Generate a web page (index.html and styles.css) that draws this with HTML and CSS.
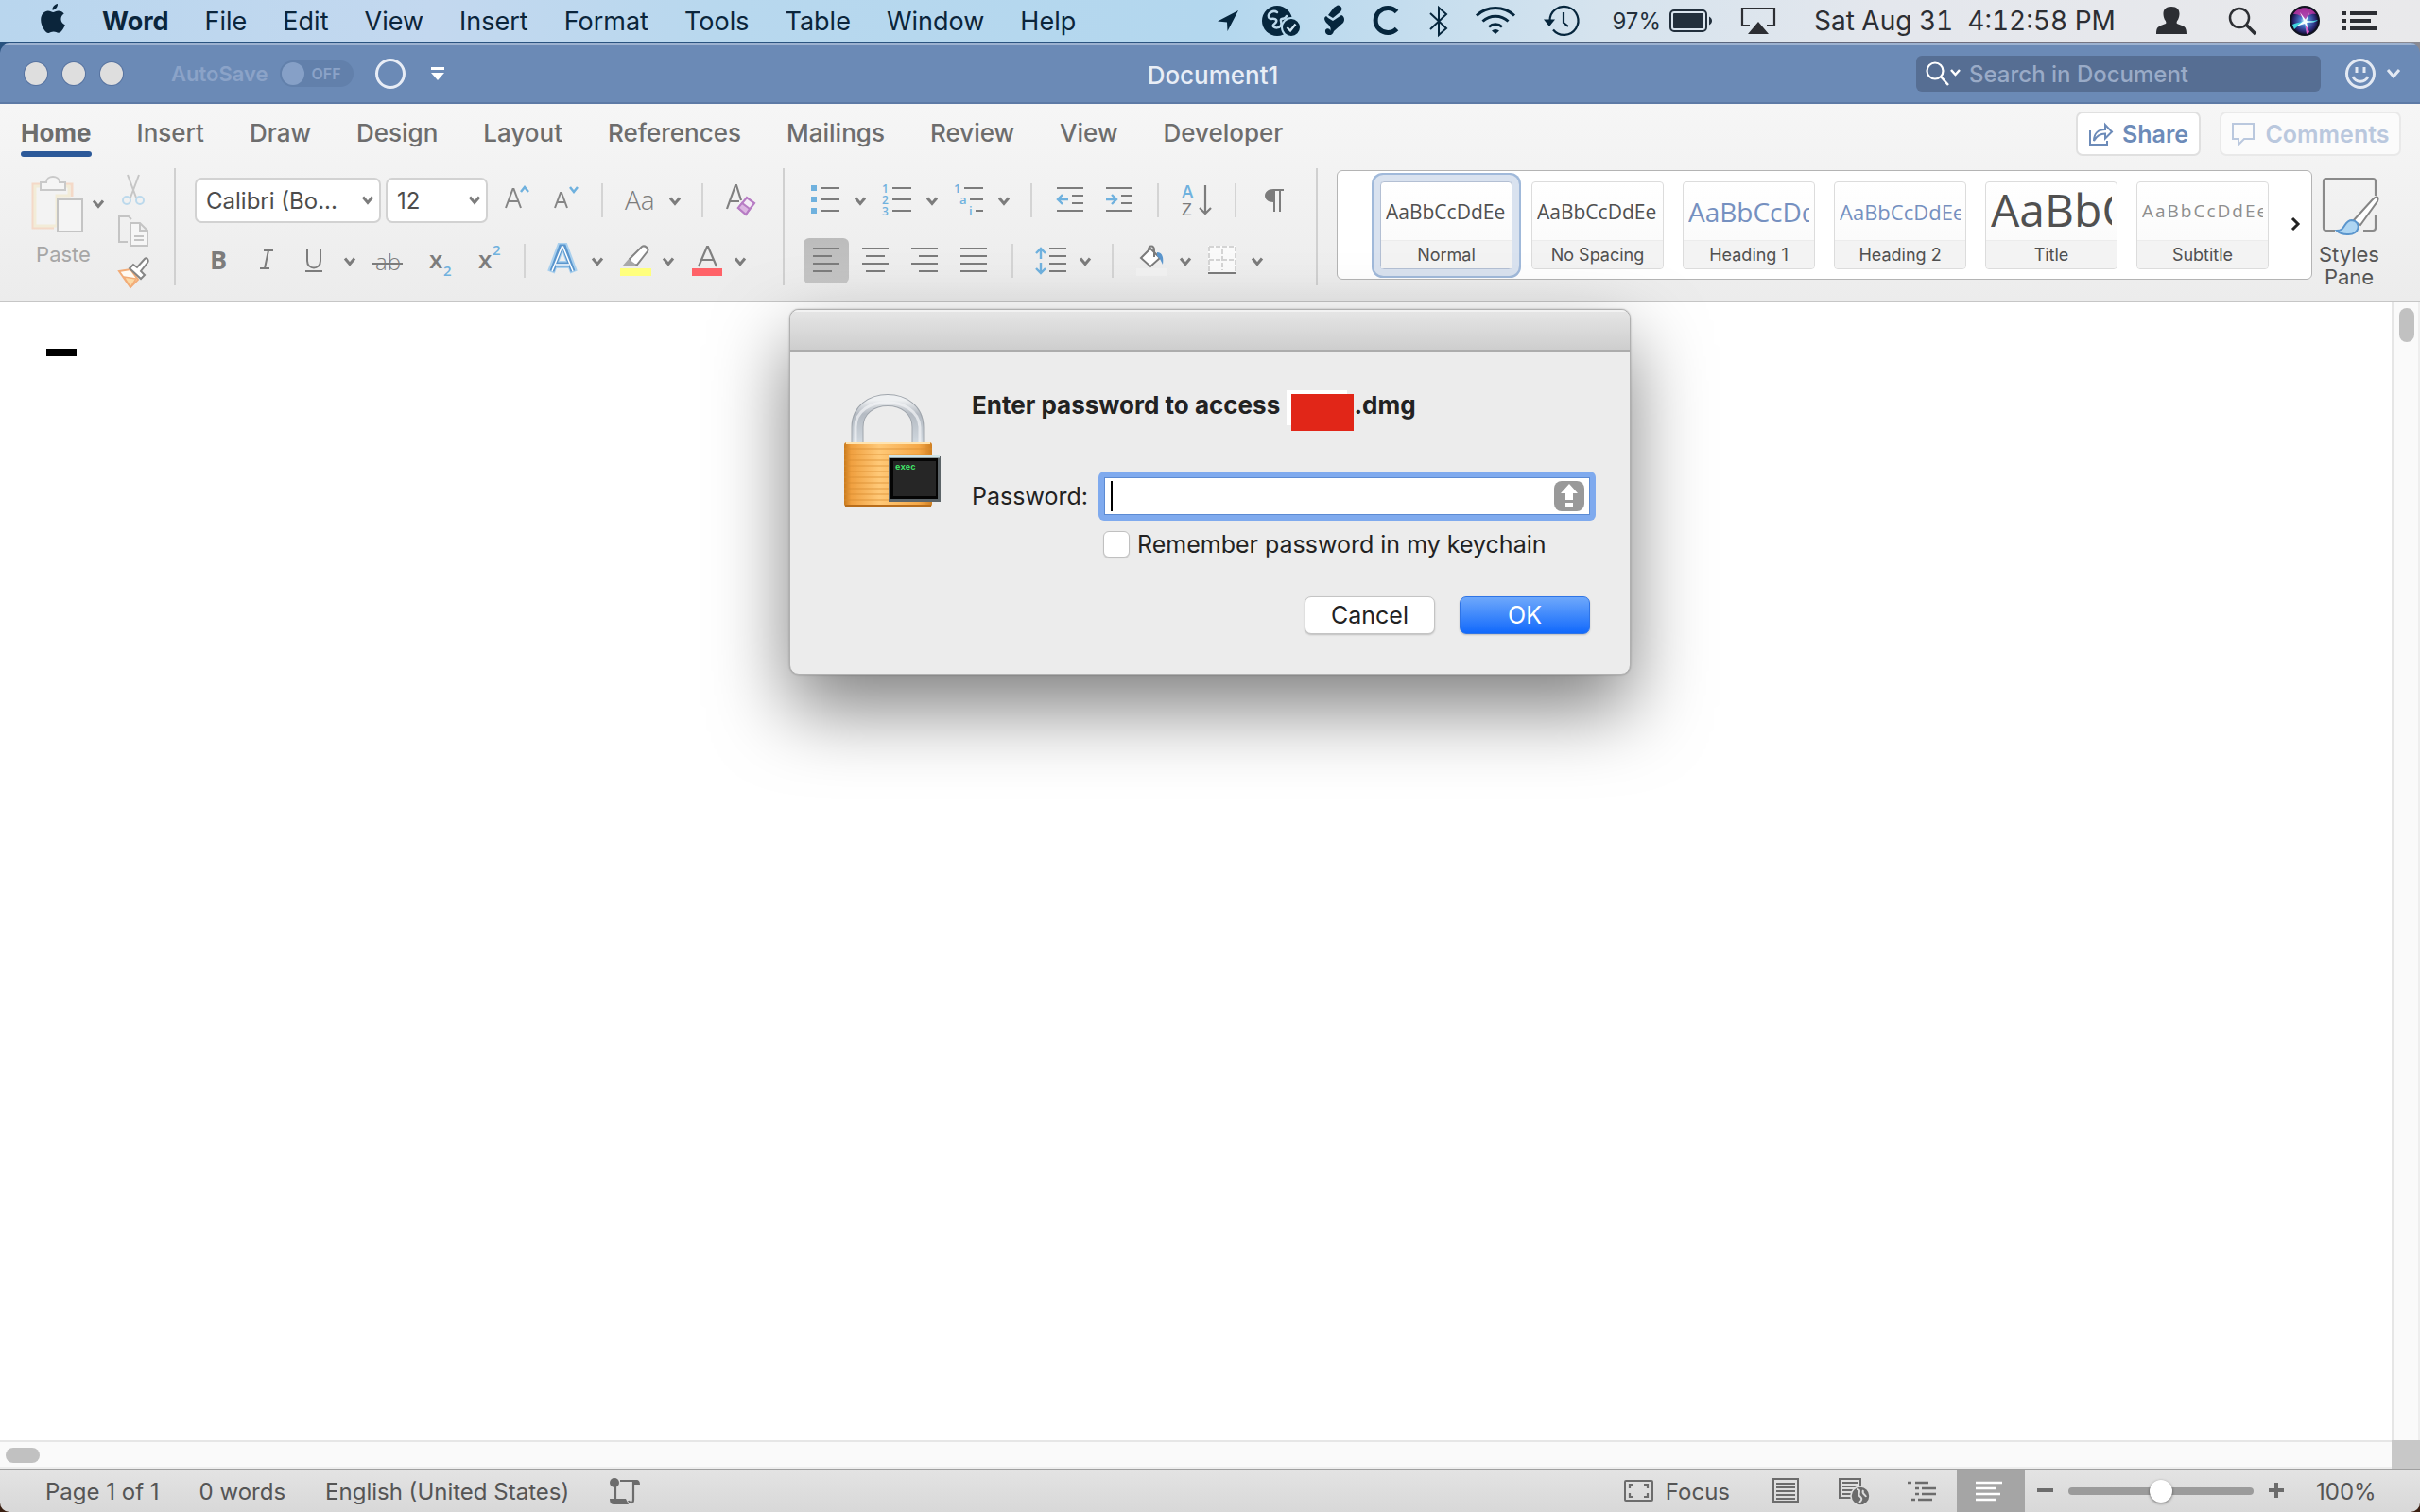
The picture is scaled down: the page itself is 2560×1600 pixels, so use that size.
FILE: index.html
```html
<!DOCTYPE html>
<html lang="en">
<head>
<meta charset="utf-8">
<title>Document1</title>
<link rel="stylesheet" href="styles.css">
</head>
<body>
<svg class="defs" aria-hidden="true">
  <symbol id="chev" viewBox="0 0 12 10" overflow="visible"><path d="M1 1.500 6 7.500 11 1.500" fill="none" stroke="currentColor" stroke-width="3"/></symbol>
  <radialGradient id="siri" cx=".5" cy=".5" r=".5"><stop offset="0" stop-color="#dff"/><stop offset=".3" stop-color="#4a7fd0"/><stop offset=".75" stop-color="#2b2a78"/><stop offset="1" stop-color="#0d0b25"/></radialGradient>
  <linearGradient id="brass" x1="0" x2="1" y1="0" y2="0"><stop offset="0" stop-color="#c97a1c"/><stop offset=".08" stop-color="#f0a040"/><stop offset=".4" stop-color="#ffc978"/><stop offset=".85" stop-color="#f5a848"/><stop offset="1" stop-color="#cf7f22"/></linearGradient>
  <linearGradient id="steel" x1="0" x2="0" y1="0" y2="1"><stop offset="0" stop-color="#eef0f2"/><stop offset=".3" stop-color="#b4bac2"/><stop offset="1" stop-color="#d3dbe2"/></linearGradient>
</svg>

<nav class="menubar">
  <svg class="apple" width="28" height="34" viewBox="0 0 28 34"><path fill="currentColor" d="M19 1c.3 3-2.400 6.500-5.600 6.600C13.100 4.500 16 1.400 19 1zM14.200 10c1.300 0 3-1.600 5.700-1.600 2.400 0 4.500 1.200 5.800 3.100-4.800 3-4 9.800 1.100 11.800-1.200 3.600-4 8.400-6.900 8.500-2 0-2.800-1.200-5.200-1.200s-3.300 1.200-5.200 1.300C6 32.100 1.200 24.300 1.200 17.900c0-6 3.900-9.300 7.600-9.400 2.400 0 4.200 1.500 5.400 1.500z"/></svg>
  <a class="app" href="#">Word</a><a href="#">File</a><a href="#">Edit</a><a href="#">View</a><a href="#">Insert</a><a href="#">Format</a><a href="#">Tools</a><a href="#">Table</a><a href="#">Window</a><a href="#">Help</a>
  <div class="extras">
    <svg width="24" height="44" viewBox="0 0 24 44"><path fill="currentColor" d="M23 11 11.500 33 11 23.500 1 22.500z"/></svg>
    <svg width="40" height="44" viewBox="0 0 40 44"><circle cx="16" cy="22" r="16" fill="currentColor"/><path d="M16 13c-4-3-10 1-9 5s6 0 8 3-5 5-3 7 6 2 8-1-2-6 1-7 4 0 5-3" fill="none" stroke="#bcd9ec" stroke-width="2.500" stroke-linecap="round"/><circle cx="31" cy="29" r="10" fill="currentColor" stroke="#b8daee" stroke-width="2"/><path d="m26.500 29 3.500 3.500 5.500-7" fill="none" stroke="#cfe5f3" stroke-width="2.400"/></svg>
    <svg width="26" height="44" viewBox="0 0 26 44"><path fill="currentColor" d="m12 8 4-2.500c4 0 6 4 3 7L11 19l-5-3zM4 17l2 2 5 3 9-6c3 1 4 5 2 8L12 33c-2 7-10 4-9-1 1-3 6-2 5 1 2-4-1-6-4-9-3-4-2-6 0-7z"/></svg>
    <svg width="34" height="44" viewBox="0 0 34 44"><path d="M28.500 12.500A13 13 0 1 0 28.500 30.500" fill="none" stroke="currentColor" stroke-width="5"/></svg>
    <svg width="30" height="44" viewBox="0 0 30 44"><path d="m6 14 17 16-8 7V8l8 7L6 31" fill="none" stroke="currentColor" stroke-width="2"/></svg>
    <svg width="48" height="44" viewBox="0 0 48 44"><g fill="none" stroke="currentColor" stroke-width="3"><path d="M1 16.500a29 29 0 0 1 40 0"/><path d="M7.500 22.500a20 20 0 0 1 27 0"/><path d="M14 28.500a10.500 10.500 0 0 1 14 0"/></g><path fill="currentColor" d="M17 32.500a6 6 0 0 1 8 0L21 36z"/></svg>
    <svg width="48" height="44" viewBox="0 0 48 44"><path d="M6.500 22A15 15 0 1 1 10 31.500M21 13v11l5 4" fill="none" stroke="currentColor" stroke-width="2.200"/><path fill="currentColor" d="M0 20.500h12L6 28z"/></svg>
    <span class="battery"><span>97%</span><svg width="52" height="44" viewBox="0 0 52 44"><rect x="2" y="11" width="38" height="22" rx="4" fill="none" stroke="currentColor" stroke-width="2"/><rect x="5" y="14" width="32" height="16" rx="1" fill="currentColor"/><path fill="currentColor" d="M43 17.500c4 2 4 7 0 9z"/></svg></span>
    <svg width="54" height="44" viewBox="0 0 54 44"><path d="M10 27H2V9h34v18h-8" fill="none" stroke="currentColor" stroke-width="2.200"/><path fill="currentColor" d="m19 23 11 13H8z"/></svg>
    <span class="clock">Sat Aug 31  4:12:58 PM</span>
    <svg width="56" height="44" viewBox="0 0 56 44"><path fill="currentColor" d="M3 36c0-9 3-8 10-11 1-1 0-3-1-4-3-7-2-14 7-14s10 7 7 14c-1 1-2 3-1 4 7 3 10 2 10 11z"/></svg>
    <svg width="36" height="44" viewBox="0 0 36 44"><circle cx="11" cy="19" r="10" fill="none" stroke="currentColor" stroke-width="2.500"/><path d="m18 26 10 10" stroke="currentColor" stroke-width="3.500"/></svg>
    <svg width="36" height="44" viewBox="0 0 36 44"><circle cx="20" cy="22" r="15" fill="url(#siri)" stroke="#10131f" stroke-width="2"/><path d="M8 15c5-9 18-9 24 0-6-1-9 2-12 6-4-5-7-6-12-6z" fill="#c637a8" opacity=".8"/><path d="M7 26c4-2 8-2 13-4 5 1 10 0 14-1-4 4-9 2-14 2 3 5 4 9 3 13-2-4-3-8-3-13-4 2-8 5-11 8" fill="#3fd6e0"/><path d="m20 22 5 12-3 2z" fill="#e45ac8"/><path d="m11 28 8-6-4-9 6 8 4-8-3 9 9 1-9 1 2 7-4-6z" fill="#f4ffff"/></svg>
    <svg width="36" height="44" viewBox="0 0 36 44"><path d="M0 14h4M8 14h28M0 22h4M8 22h22M0 30h4M8 30h28" stroke="currentColor" stroke-width="4"/></svg>
  </div>
</nav>

<div class="window">
  <header class="titlebar">
    <div class="side">
      <div class="lights"><button aria-label="Close"></button><button aria-label="Minimize"></button><button aria-label="Zoom"></button></div>
      <label class="autosave">AutoSave <span class="toggle"><input type="checkbox" disabled>OFF</span></label>
      <button class="quick" aria-label="Refresh"><svg width="34" height="34" viewBox="0 0 34 34"><circle cx="17" cy="17" r="14.500" fill="none" stroke="#e8edf6" stroke-width="3"/></svg></button>
      <button class="more" aria-label="More"><svg width="16" height="20" viewBox="0 0 16 20"><path fill="#fff" d="M1 3h14v3H1zM1 9h14l-7 8z"/></svg></button>
    </div>
    <h1>Document1</h1>
    <div class="side end">
      <label class="search"><svg width="38" height="30" viewBox="0 0 38 30"><circle cx="10" cy="12" r="8.500" fill="none" stroke="#fff" stroke-width="2.200"/><path d="m16 18 8 9M27 11l4.500 5 4.500-5" fill="none" stroke="#fff" stroke-width="2.500"/></svg><input type="text" placeholder="Search in Document" aria-label="Search in Document"></label>
      <button class="smile" aria-label="Feedback"><svg width="60" height="36" viewBox="0 0 60 36"><circle cx="17" cy="18" r="14.500" fill="none" stroke="#e3e9f3" stroke-width="3"/><path d="M13 11v6M21 11v6M9 21c3 7 13 7 16 0M46 14l6 7 6-7" fill="none" stroke="#e3e9f3" stroke-width="3"/></svg></button>
    </div>
  </header>

  <div class="tabs">
    <a class="active" href="#">Home</a><a href="#">Insert</a><a href="#">Draw</a><a href="#">Design</a><a href="#">Layout</a><a href="#">References</a><a href="#">Mailings</a><a href="#">Review</a><a href="#">View</a><a href="#">Developer</a>
    <div class="actions">
      <button class="share"><svg width="26" height="26" viewBox="0 0 26 26"><path d="M2 9v15h18v-4M6 20c0-8 5-12 12-12V3l7 7.500-7 7v-5c-5 0-9 2-12 7.500z" fill="none" stroke="currentColor" stroke-width="2"/></svg>Share</button>
      <button class="comments"><svg width="26" height="26" viewBox="0 0 26 26"><path d="M2 2h22v16H14l-6 6v-6H2z" fill="none" stroke="currentColor" stroke-width="2"/></svg>Comments</button>
    </div>
  </div>

  <div class="ribbon">
    <div class="clipboard">
      <button class="paste"><svg width="84" height="64" viewBox="0 0 84 64"><path d="M10 9H3v46h22M38 9h6v13" fill="none" stroke="#f4d9c8" stroke-width="3"/><path d="M5 11h36v10H28v32H5z" fill="#f3f3f3" stroke="#f2ecd8" stroke-width="3"/><path d="M11 15V7h6c0-8 14-8 14 0h6v8z" fill="#f5f5f5" stroke="#c9c9c9" stroke-width="2"/><rect x="29" y="25" width="26" height="34" fill="#f4f4f4" stroke="#c4c4c4" stroke-width="2"/><use href="#chev" x="66" y="25" width="12" height="10" color="#7c7c7c"/></svg><span>Paste</span></button>
      <div class="clipcol">
        <button aria-label="Cut"><svg width="34" height="34" viewBox="0 0 34 34"><path d="m11 1 9 24M23 1l-9 24" stroke="#c6c6c6" stroke-width="2"/><g fill="none" stroke="#bcd9ec" stroke-width="2"><circle cx="10" cy="28" r="4"/><circle cx="24" cy="28" r="4"/></g></svg></button>
        <button aria-label="Copy"><svg width="34" height="34" viewBox="0 0 34 34"><path d="M11 28H2V1h10l3 3" fill="none" stroke="#c4c4c4" stroke-width="2"/><path d="M14 8h10l8 8v16H14zM24 8v8h8M18 22h10M18 26h10" fill="#f6f6f6" stroke="#c4c4c4" stroke-width="2"/></svg></button>
        <button aria-label="Format Painter"><svg width="34" height="34" viewBox="0 0 34 34"><path d="m2 15 12-2 8 11-8 8z" fill="#fffaf2" stroke="#f2ac77" stroke-width="2"/><path d="m7 21 13 2-6 9z" fill="#fbd9a5" stroke="#f2ac77" stroke-width="1.500"/><path d="m13 12 4-4 4 3 8-9c2-2 5 1 3 4l-7 9 4 4-4 4z" fill="#fff" stroke="#858585" stroke-width="2"/></svg></button>
      </div>
    </div>
    <div class="divider"></div>

    <div class="group font">
      <div class="row">
        <div class="drop family"><select aria-label="Font"><option>Calibri (Bo...</option></select><svg width="12" height="10"><use href="#chev"/></svg></div>
        <div class="drop size"><select aria-label="Font size"><option>12</option></select><svg width="12" height="10"><use href="#chev"/></svg></div>
        <button aria-label="Grow font"><svg width="52" height="48" viewBox="0 0 52 48"><path d="m11 32 7.500-20h1L27 32M13.500 25h11" fill="none" stroke="#858585" stroke-width="2"/><path d="m27 15 4-5 4 5" fill="none" stroke="#6fb1de" stroke-width="2.500"/></svg></button>
        <button aria-label="Shrink font"><svg width="52" height="48" viewBox="0 0 52 48"><path d="m11 32 6-16h1l6 16M13 26h9" fill="none" stroke="#858585" stroke-width="2"/><path d="m27 10 4 5 4-5" fill="none" stroke="#6fb1de" stroke-width="2.500"/></svg></button>
        <i class="sep"></i>
        <button aria-label="Change case"><svg width="88" height="48" viewBox="0 0 88 48"><text x="15" y="34" class="light" font-size="28">Aa</text><use href="#chev" x="62" y="20" width="12" height="10"/></svg></button>
        <i class="sep"></i>
        <button aria-label="Clear formatting"><svg width="62" height="48" viewBox="0 0 62 48"><path d="m17 33 9-25h1l5 16M20 25h10" fill="none" stroke="#808080" stroke-width="2.200"/><path d="m29 32 9-11 8 6-9 12z" fill="#f4ecf6" stroke="#b77cc4" stroke-width="2.200"/><path d="m29 32 4-5 8 6-4 6z" fill="#dcb6e2" stroke="#b77cc4" stroke-width="2"/></svg></button>
      </div>
      <div class="row">
        <button aria-label="Bold"><svg width="50" height="48" viewBox="0 0 50 48"><text x="16" y="33" class="bold" font-size="27">B</text></svg></button>
        <button aria-label="Italic"><svg width="52" height="48" viewBox="0 0 52 48"><path d="M23 13h10M19 32h10M28 13l-4 19" fill="none" stroke="#7c7c7c" stroke-width="2"/></svg></button>
        <button aria-label="Underline"><svg width="78" height="48" viewBox="0 0 78 48"><path d="M17 12v12c0 10 14 10 14 0V12M15 35h18" fill="none" stroke="#7c7c7c" stroke-width="2"/><use href="#chev" x="56" y="20" width="12" height="10"/></svg></button>
        <button aria-label="Strikethrough"><svg width="50" height="48" viewBox="0 0 50 48"><text x="11" y="34" class="light" font-size="24">ab</text><path d="M8 27h32" stroke="#7c7c7c" stroke-width="2"/></svg></button>
        <button aria-label="Subscript"><svg width="56" height="48" viewBox="0 0 56 48"><text x="18" y="32" class="semi" font-size="26">x</text><text x="33" y="40" class="blue" font-size="15">2</text></svg></button>
        <button aria-label="Superscript"><svg width="54" height="48" viewBox="0 0 54 48"><text x="14" y="32" class="semi" font-size="26">x</text><text x="29" y="18" class="blue" font-size="15">2</text></svg></button>
        <i class="sep"></i>
        <button aria-label="Text effects"><svg width="80" height="48" viewBox="0 0 80 48"><path d="m19 36 10-27h4l10 27M24 28h14" fill="none" stroke="#a9d0ee" stroke-width="8"/><path d="m20 35 9.500-26h3L42 35M24 28h14" fill="none" stroke="#5b96cd" stroke-width="5"/><path d="m20 35 10.500-26h1L42 35M24 28h14" fill="none" stroke="#fff" stroke-width="1.500"/><use href="#chev" x="62" y="20" width="12" height="10"/></svg></button>
        <button aria-label="Highlight"><svg width="76" height="48" viewBox="0 0 76 48"><path fill="#ffff7d" d="M12 32h33v8H12z"/><path d="M22 22 35 9c3-2 8 2 6 5L30 28c-4 1-8-2-8-6z" fill="#fff" stroke="#858585" stroke-width="2"/><path d="m21 22 8 6-3 2H14z" fill="#a8a8a8"/><use href="#chev" x="57" y="20" width="12" height="10"/></svg></button>
        <button aria-label="Font color"><svg width="80" height="48" viewBox="0 0 80 48"><path fill="#ff6268" d="M12 32h32v8H12z"/><path d="m19 30 9-21h1l9 21M22 23h13" fill="none" stroke="#808080" stroke-width="2.200"/><use href="#chev" x="57" y="20" width="12" height="10"/></svg></button>
      </div>
    </div>
    <div class="divider"></div>

    <div class="group para">
      <div class="row">
        <button aria-label="Bullets"><svg width="72" height="48" viewBox="0 0 72 48"><path fill="#6fb1de" d="M8 8h6v6H8zM8 20h6v6H8zM8 32h6v6H8z"/><path d="M18 11h20M18 23h20M18 35h20" stroke="#7c7c7c" stroke-width="2"/><use href="#chev" x="54" y="20" width="12" height="10"/></svg></button>
        <button aria-label="Numbering"><svg width="76" height="48" viewBox="0 0 76 48"><text class="blue" font-size="12"><tspan x="11" y="16">1</tspan><tspan x="11" y="28">2</tspan><tspan x="11" y="40">3</tspan></text><path d="M22 11h20M22 23h20M22 35h20" stroke="#7c7c7c" stroke-width="2"/><use href="#chev" x="58" y="20" width="12" height="10"/></svg></button>
        <button aria-label="Multilevel list"><svg width="84" height="48" viewBox="0 0 84 48"><text class="blue" font-size="13"><tspan x="11" y="16">1</tspan><tspan x="17" y="28">a</tspan><tspan x="27" y="40">i</tspan></text><path d="M22 11h20M28 23h14M34 35h8" stroke="#7c7c7c" stroke-width="2"/><use href="#chev" x="58" y="20" width="12" height="10"/></svg></button>
        <i class="sep"></i>
        <button aria-label="Decrease indent"><svg width="58" height="48" viewBox="0 0 58 48"><path d="M18 11h28M34 19h12M34 27h12M18 35h28" stroke="#7c7c7c" stroke-width="2"/><path d="M30 23H19M24 18l-5 5 5 5" fill="none" stroke="#6fb1de" stroke-width="2.400"/></svg></button>
        <button aria-label="Increase indent"><svg width="58" height="48" viewBox="0 0 58 48"><path d="M12 11h28M28 19h12M28 27h12M12 35h28" stroke="#7c7c7c" stroke-width="2"/><path d="M12 23h11M18 18l5 5-5 5" fill="none" stroke="#6fb1de" stroke-width="2.400"/></svg></button>
        <i class="sep"></i>
        <button aria-label="Sort"><svg width="64" height="48" viewBox="0 0 64 48"><text x="16" y="22" class="blue" font-size="19">A</text><text x="16" y="40" class="grey" font-size="19">Z</text><path d="M41 8v30M35 32l6 6 6-6" fill="none" stroke="#7c7c7c" stroke-width="2.200"/></svg></button>
        <i class="sep"></i>
        <button aria-label="Show marks"><svg width="64" height="48" viewBox="0 0 64 48"><path fill="#7c7c7c" d="M42 12v2h-3v22h-2V14h-4v22h-2V26c-12 0-12-14 0-14z"/></svg></button>
      </div>
      <div class="row">
        <div class="align">
          <button class="on" aria-label="Align left"><svg width="48" height="48" viewBox="0 0 48 48"><path d="M10 11h28M10 19h20M10 27h28M10 35h20" stroke="#7c7c7c" stroke-width="2"/></svg></button>
          <button aria-label="Center"><svg width="48" height="48" viewBox="0 0 48 48"><path d="M10 11h28M14 19h20M10 27h28M14 35h20" stroke="#7c7c7c" stroke-width="2"/></svg></button>
          <button aria-label="Align right"><svg width="48" height="48" viewBox="0 0 48 48"><path d="M10 11h28M18 19h20M10 27h28M18 35h20" stroke="#7c7c7c" stroke-width="2"/></svg></button>
          <button aria-label="Justify"><svg width="48" height="48" viewBox="0 0 48 48"><path d="M10 11h28M10 19h28M10 27h28M10 35h28" stroke="#7c7c7c" stroke-width="2"/></svg></button>
        </div>
        <i class="sep"></i>
        <button aria-label="Line spacing"><svg width="88" height="48" viewBox="0 0 88 48"><path d="M30 11h18M30 19h18M30 27h18M30 35h18" stroke="#7c7c7c" stroke-width="2"/><path d="M21 22V12M16 16l5-5 5 5M21 26v10M16 32l5 5 5-5" fill="none" stroke="#6fb1de" stroke-width="2.400"/><use href="#chev" x="62" y="20" width="12" height="10"/></svg></button>
        <i class="sep"></i>
        <button aria-label="Shading"><svg width="80" height="48" viewBox="0 0 80 48"><path fill="#f2f2f2" d="M16 32h32v8H16z"/><path d="m21 21 10-10 10 10-10 9z" fill="#fff" stroke="#7c7c7c" stroke-width="2"/><path d="M29 13c0-6 6-6 6 0v7" fill="none" stroke="#7c7c7c" stroke-width="2"/><path d="M38 15c6 0 7 6 6 13-2-4-3-7-6-9z" fill="#5b96cd"/><use href="#chev" x="62" y="20" width="12" height="10"/></svg></button>
        <button aria-label="Borders"><svg width="80" height="48" viewBox="0 0 80 48"><path fill="#fafafa" d="M12 8h30v28H12z"/><path d="M13 9h28v26M13 9v26M27 12v22M13 23h28" fill="none" stroke="#d4d4d4" stroke-width="2" stroke-dasharray="5 2"/><path d="M12 37h30" stroke="#7c7c7c" stroke-width="2"/><use href="#chev" x="58" y="20" width="12" height="10"/></svg></button>
      </div>
    </div>
    <div class="divider"></div>

    <div class="gallery">
      <button class="card selected"><span class="sample">AaBbCcDdEe</span><span class="name">Normal</span></button>
      <button class="card"><span class="sample">AaBbCcDdEe</span><span class="name">No Spacing</span></button>
      <button class="card"><span class="sample h1s">AaBbCcDdEe</span><span class="name">Heading 1</span></button>
      <button class="card"><span class="sample h2s">AaBbCcDdEe</span><span class="name">Heading 2</span></button>
      <button class="card"><span class="sample title">AaBbCcDdEe</span><span class="name">Title</span></button>
      <button class="card"><span class="sample sub">AaBbCcDdEe</span><span class="name">Subtitle</span></button>
      <button class="next" aria-label="More styles"><svg width="12" height="14" viewBox="0 0 12 14"><path d="m2 1 6 6-6 6" fill="none" stroke="#222" stroke-width="3"/></svg></button>
    </div>
    <button class="pane"><svg width="64" height="64" viewBox="0 0 64 64"><path d="M15 58H6c-2 0-3-1-3-3V6c0-2 1-3 3-3h49c2 0 3 1 3 3v15M58 42v13c0 2-1 3-3 3H45" fill="none" stroke="#8a8a8a" stroke-width="2.200"/><path d="m34 48 20-22c5-5 8-5 6 1L42 52z" fill="#fff" stroke="#858585" stroke-width="2"/><path d="M17 58c10 0 7-11 16-11 10 1 9 16-5 15-5 0-9-2-11-4z" fill="#aed5f2" stroke="#5b96cd" stroke-width="2"/></svg><span>Styles Pane</span></button>
  </div>

  <main class="document">
    <div class="page"><div class="mark"></div></div>
    <div class="vscroll"><i></i></div>
    <div class="hscroll"><i></i></div>
    <div class="corner"></div>
  </main>

  <footer class="status">
    <span>Page 1 of 1</span><span>0 words</span><span>English (United States)</span>
    <svg width="34" height="30" viewBox="0 0 34 30"><circle cx="6" cy="6" r="5" fill="#6c6c6c"/><path d="M7 10v14M12 4h14v20c0 4-4 4-5 1" fill="none" stroke="#6c6c6c" stroke-width="2.200"/><path d="M1 23h17l3 6H5c-3 0-4-3-4-6zM25 3h4c3 0 4 2 4 5h-6z" fill="#6c6c6c"/></svg>
    <div class="views">
      <button class="focus"><svg width="32" height="26" viewBox="0 0 32 26"><rect x="1" y="2" width="29" height="21" rx="1" fill="none" stroke="#6c6c6c" stroke-width="2"/><path d="M6 10V6h4M21 6h4v4M25 15v4h-4M10 19H6v-4" fill="none" stroke="#6c6c6c" stroke-width="2.200"/></svg>Focus</button>
      <button aria-label="Print layout"><svg width="71" height="44" viewBox="0 0 71 44"><path d="M24 9h26v24H24zM27 14h20M27 18h20M27 22h20M27 26h20M27 30h20" fill="none" stroke="#6c6c6c" stroke-width="2"/></svg></button>
      <button aria-label="Web layout"><svg width="75" height="44" viewBox="0 0 75 44"><path d="M37 29H23V9h22v9M26 13h16M26 17h16M26 21h11M26 25h10" fill="none" stroke="#6c6c6c" stroke-width="2"/><circle cx="45" cy="27" r="10" fill="#6c6c6c" stroke="#dedede" stroke-width="1.500"/><path d="M41 20c6 0 1 5 3 7s4 3 0 7M48 21c-2 4 2 4 3 7" fill="none" stroke="#ddd" stroke-width="2"/></svg></button>
      <button aria-label="Outline"><svg width="72" height="44" viewBox="0 0 72 44"><path d="M20 13h4M28 13h14M28 19h4M35 19h15M28 25h4M35 25h15M24 31h4M31 31h15" stroke="#6c6c6c" stroke-width="2.400"/></svg></button>
      <button class="on" aria-label="Draft"><svg width="72" height="44" viewBox="0 0 72 44"><path d="M20 13h28M20 19h22M20 25h26M20 31h22" stroke="#fff" stroke-width="2.400"/></svg></button>
      <button aria-label="Zoom out"><svg width="44" height="44" viewBox="0 0 44 44"><path d="M13 21h17" stroke="#6c6c6c" stroke-width="4"/></svg></button>
      <input class="zoom" type="range" min="0" max="100" value="50" aria-label="Zoom">
      <button aria-label="Zoom in"><svg width="46" height="44" viewBox="0 0 46 44"><path d="M16 21h16M24 13v16" stroke="#6c6c6c" stroke-width="4"/></svg></button>
      <span class="pct">100%</span>
    </div>
  </footer>
</div>

<form class="dialog" role="dialog" aria-label="Password">
  <div class="dialog-bar"></div>
  <div class="dialog-body">
    <svg class="lock" width="104" height="128" viewBox="0 0 104 128">
      <path d="M17 60V40c0-38 64-38 64 0v20" fill="none" stroke="#a0a6ad" stroke-width="13"/>
      <path d="M17 60V40c0-38 64-38 64 0v20" fill="none" stroke="url(#steel)" stroke-width="11"/>
      <path d="M15 60V40c0-35 66-35 68 0v20" fill="none" stroke="#f2f4f6" stroke-width="3" opacity=".7"/>
      <rect x="3" y="56" width="93" height="68" rx="3" fill="url(#brass)"/>
      <path d="M3 63h93M3 69h93M3 75h93M3 81h93M3 87h93M3 93h93M3 99h93M3 105h93M3 111h93M3 117h93" stroke="#d98d32" stroke-width="1.500" opacity=".5"/>
      <path d="M5 57h89" stroke="#ffe4b0" stroke-width="2"/><path d="M4 123h91" stroke="#b86d1b" stroke-width="2"/>
      <rect x="50" y="71" width="55" height="48" fill="#5c6468"/><path d="M50 71h54" stroke="#cfe3e6" stroke-width="3"/><rect x="52" y="73" width="50" height="43" fill="#050505"/><rect x="55" y="76" width="45" height="37" fill="#262626"/>
      <text x="57" y="85" class="exec" font-size="9">exec</text>
    </svg>
    <div class="fields">
      <h2>Enter password to access <span class="redacted"></span>.dmg</h2>
      <label for="pw">Password:</label>
      <div class="pwbox"><input id="pw" type="password"><i class="caret"></i><svg width="32" height="32" viewBox="0 0 32 32"><rect width="32" height="32" rx="8" fill="#999"/><path fill="#fff" d="m16 3 9 10h-5v7h-8v-7H7zM12 23h8v5h-8z"/></svg></div>
      <label class="remember"><input type="checkbox">Remember password in my keychain</label>
      <div class="buttons"><button type="button">Cancel</button><button type="button" class="ok">OK</button></div>
    </div>
  </div>
</form>
</body>
</html>
```
FILE: styles.css
```css
* { box-sizing: border-box; }
body {
  margin: 0;
  min-height: 100vh;
  display: flex;
  flex-direction: column;
  position: relative;
  overflow-x: hidden;
  font-family: Inter, "Liberation Sans", sans-serif;
  font-size: 25px;
  color: #555;
  background: linear-gradient(90deg, #28527f, #2b5480 50%, #6c6c7c 80%, #8a8a92) top / 100% 100px no-repeat, #3a2013;
}
svg { display: block; flex: none; overflow: visible; }
.defs { position: absolute; width: 0; height: 0; }
button { font: inherit; color: inherit; background: none; border: 0; padding: 0; margin: 0; }
input, select { font: inherit; margin: 0; }
a { color: inherit; text-decoration: none; }
span, a, label, button { white-space: nowrap; }

.menubar {
  display: flex;
  align-items: center;
  gap: 38px;
  height: 44px;
  padding: 0 46px 0 42px;
  font-size: 27px;
  color: #0b253b;
  background: linear-gradient(90deg, #b9d6ee, #c3d8ef 18%, #b8d8ee 30%, #b3d7ee 50%, #d5e3ee 66%, #e4e7ed 78%, #e9e9eb);
}
.apple { margin-bottom: 4px; }
.app { font-weight: 700; }
.extras { display: flex; align-items: center; gap: 24px; margin-left: auto; color: #06263d; }
.battery { display: flex; align-items: center; gap: 8px; font-size: 24px; color: #222f3c; }
.battery ~ * { color: #2c2e33; }
.clock { min-width: 335px; white-space: pre; font-size: 28px; font-variant-numeric: tabular-nums; }

.window {
  flex: 1;
  display: flex;
  flex-direction: column;
  margin-top: 2px;
  border-radius: 10px;
  overflow: hidden;
}
.titlebar {
  display: flex;
  align-items: center;
  height: 64px;
  padding: 0 20px 0 26px;
  background: #6b8ab6;
  border-top: 2px solid #9db2d0;
  border-bottom: 2px solid #5d7aa6;
}
.side { flex: 1; display: flex; align-items: center; }
.end { justify-content: flex-end; }
.lights { display: flex; gap: 16px; }
.lights button { width: 24px; height: 24px; border-radius: 50%; background: #dedede; box-shadow: 0 0 0 1px #5773a0; }
.autosave { display: flex; align-items: center; gap: 12px; margin-left: 51px; font-size: 22px; font-weight: 600; color: #8ba3c8; }
.toggle { display: flex; align-items: center; gap: 8px; width: 78px; height: 28px; padding: 0 2px; border-radius: 14px; background: #6280ab; font-size: 16px; }
.toggle input { appearance: none; width: 24px; height: 24px; border-radius: 50%; background: #86a0c7; }
.quick { margin-left: 22px; }
.more { margin-left: 25px; }
.titlebar h1 { margin: 0; padding-top: 2px; font-size: 26px; font-weight: 500; color: #e9eef6; }
.search {
  display: flex;
  align-items: center;
  gap: 8px;
  width: 428px;
  height: 38px;
  padding: 0 10px;
  border-radius: 6px;
  background: #566e93;
}
.search input { flex: 1; min-width: 0; border: 0; padding: 0; background: none; font-size: 24px; font-weight: 500; }
.search input::placeholder { color: #9aabc7; opacity: 1; }
.smile { margin-left: 25px; }

.tabs {
  display: flex;
  align-items: center;
  gap: 48px;
  height: 64px;
  padding: 0 20px 0 22px;
  background: linear-gradient(#f6f6f6, #f3f3f3);
  font-size: 26px;
  font-weight: 500;
  color: #6d6d6d;
}
.tabs > a { align-self: flex-start; line-height: 50px; margin-top: 6px; }
.tabs > .active { font-weight: 700; }
.tabs > .active::after { content: ""; display: block; height: 6px; margin-top: -6px; border-radius: 3px; background: #2c5999; }
.actions { display: flex; gap: 20px; margin-left: auto; align-self: flex-start; padding-top: 8px; font-size: 25px; font-weight: 600; }
.actions button { display: flex; align-items: center; justify-content: center; gap: 10px; height: 47px; border: 2px solid #e0e0e0; border-radius: 7px; background: #fff; }
.actions .share { width: 132px; color: #6c8bb9; }
.actions .comments { width: 192px; color: #bac8de; border-color: #e9e9e9; background: #fbfbfb; }

.ribbon {
  display: flex;
  height: 146px;
  padding-top: 4px;
  background: linear-gradient(#f3f3f3, #ececec);
  border-bottom: 2px solid #c6c6c6;
}
.divider { width: 2px; height: 124px; background: #d0d0d0; }
.clipboard { display: flex; width: 184px; padding-left: 30px; }
.paste { display: flex; flex-direction: column; align-items: flex-start; width: 94px; padding-top: 8px; font-size: 22px; color: #a6a6a6; }
.paste svg { margin-left: 2px; }
.paste span { width: 74px; margin-top: 7px; text-align: center; line-height: 24px; }
.clipcol { display: flex; flex-direction: column; gap: 10px; padding-top: 6px; }
.group { display: flex; flex-direction: column; gap: 16px; padding: 10px 0 0 20px; color: #7c7c7c; }
.font { width: 642px; }
.para { width: 562px; }
.row { display: flex; align-items: center; height: 48px; }
.sep { flex: none; width: 2px; height: 36px; margin: 0 8px; background: #d4d4d4; }
.align { display: flex; gap: 4px; margin-right: 8px; }
.align .on { border-radius: 6px; background: linear-gradient(#bcbcbc, #c6c6c6); }
.drop { display: grid; align-items: center; height: 48px; border: 2px solid #d2d2d2; border-radius: 7px; background: #fff; }
.drop > * { grid-area: 1 / 1; }
.drop svg { justify-self: end; margin-right: 6px; }
.drop select { appearance: none; width: 100%; height: 44px; border: 0; padding: 0 10px; background: none; color: #4c4c4c; font-size: 24px; }
.family { width: 197px; margin-right: 5px; }
.size { width: 108px; margin-right: 8px; }
svg text { font-family: "Open Sans", "Noto Sans", sans-serif; fill: #7c7c7c; }
svg .light { font-weight: 300; }
svg .bold { font-weight: 700; }
svg .semi { font-weight: 600; }
svg .blue { fill: #6fb1de; font-weight: 600; }
svg .exec { font-family: "Liberation Mono", monospace; fill: #42e86a; font-weight: 700; }

.gallery {
  flex: 1;
  display: flex;
  align-items: flex-start;
  gap: 20px;
  height: 116px;
  margin: 2px 0 0 20px;
  padding: 11px 10px 0 45px;
  border: 1px solid #b4b4b4;
  border-radius: 6px;
  background: #fff;
}
.card {
  flex: none;
  display: flex;
  flex-direction: column;
  width: 140px;
  height: 93px;
  border: 1px solid #dcdcdc;
  border-radius: 4px;
  overflow: hidden;
  background: linear-gradient(#fff, #f9f9f9);
}
.selected { overflow: visible; border-color: #b3bfd3; box-shadow: 0 0 0 7px #d9e2ef, 0 0 0 9px #a0b9da; }
.sample { align-self: stretch; height: 61px; margin: 0 5px; line-height: 62px; overflow: hidden; text-align: left; font-family: "Open Sans", "Noto Sans", sans-serif; font-size: 21px; color: #505050; }
.h1s { font-size: 28px; color: #7590c0; }
.h2s { font-size: 22px; color: #7590c0; }
.title { font-size: 48px; line-height: 58px; }
.sub { font-size: 19px; letter-spacing: 2px; line-height: 60px; color: #8e8e8e; }
.name { height: 30px; border-top: 1px solid #ececec; background: #f3f3f3; line-height: 30px; font-size: 18px; color: #505050; }
.next { margin: 38px 0 0 auto; }
.pane { display: flex; flex-direction: column; align-items: center; width: 114px; padding: 8px 36px 0 0; font-size: 22px; color: #555; }
.pane span { width: 80px; margin-top: 7px; line-height: 24px; white-space: normal; }
.pane svg { margin-left: 4px; }

.document { flex: 1; display: grid; grid-template: 1fr 30px / 1fr 30px; background: #fff; }
.page { padding: 49px; }
.mark { width: 32px; height: 8px; background: #000; }
.vscroll { border-left: 2px solid #e6e6e6; border-right: 2px solid #eee; background: #fafafa; padding: 6px 4px 0 6px; }
.vscroll i { display: block; width: 16px; height: 36px; border-radius: 8px; background: #c1c1c1; }
.hscroll { border-top: 2px solid #e6e6e6; border-bottom: 2px solid #eee; background: #fafafa; padding: 6px; }
.hscroll i { display: block; width: 36px; height: 16px; border-radius: 8px; background: #c1c1c1; }
.corner { background: #c8c8c8; }

.status {
  display: flex;
  align-items: center;
  gap: 42px;
  height: 46px;
  padding-left: 48px;
  border-top: 2px solid #a0a0a0;
  background: linear-gradient(#e3e3e3, #d8d8d8);
  font-size: 24px;
}
.views { display: flex; align-items: center; margin-left: auto; }
.views .on { background: #a5a5a5; }
.focus { display: flex; align-items: center; gap: 12px; margin-right: 22px; }
.zoom { appearance: none; width: 196px; height: 8px; border-radius: 4px; background: #9b9b9b; margin-left: 2px; }
.zoom::-webkit-slider-thumb { appearance: none; width: 24px; height: 24px; border-radius: 50%; background: #fff; box-shadow: 0 1px 3px rgba(0, 0, 0, .5); }
.pct { width: 130px; padding-left: 20px; }

.dialog {
  position: absolute;
  top: 327px;
  left: 50%;
  width: 890px;
  margin-left: -445px;
  border: 1px solid #b0b0b0;
  border-radius: 10px;
  overflow: hidden;
  background: #ececec;
  box-shadow: 0 0 2px rgba(0, 0, 0, .3), 0 36px 80px rgba(0, 0, 0, .5);
  font-size: 25px;
  color: #222;
}
.dialog-bar { height: 44px; background: linear-gradient(#e6e6e6, #cecece); border-bottom: 2px solid #acacac; box-shadow: inset 0 2px #f2f2f2; }
.dialog-body { display: flex; gap: 34px; padding: 40px 36px 42px 54px; }
.fields { flex: 1; display: grid; grid-template-columns: 134px 1fr; align-items: center; }
.fields h2 { grid-column: 1 / 3; margin: 0 0 53px; line-height: 34px; font-size: 26px; font-weight: 700; }
.redacted { display: inline-block; position: relative; width: 66px; height: 39px; margin: 5px 0 -15px 6px; vertical-align: top; background: #e12618; box-shadow: -6px -5px 0 -1px #fff; }
.pwbox { display: grid; align-items: center; height: 52px; padding: 6px; border-radius: 6px; background: #7faaee; }
.pwbox > * { grid-area: 1 / 1; }
.pwbox input { width: 100%; height: 40px; border: 1px solid #5c8bd3; background: #fff; padding: 0 40px 0 8px; outline: 0; }
.pwbox svg { justify-self: end; margin-right: 6px; }
.caret { width: 2px; height: 32px; margin-left: 7px; background: #000; }
.remember { grid-column: 2; display: flex; align-items: center; gap: 8px; height: 30px; margin: 10px 0 0 5px; }
.remember input { appearance: none; width: 28px; height: 28px; border: 1px solid #c0c0c0; border-radius: 6px; background: #fff; box-shadow: 0 1px 1px #ccc; }
.buttons { grid-column: 1 / 3; display: flex; justify-content: flex-end; gap: 26px; margin: 40px 6px 0 0; }
.buttons button { width: 138px; height: 40px; border: 1px solid #c4c4c4; border-radius: 7px; background: #fff; box-shadow: 0 1px 2px rgba(0, 0, 0, .2); }
.buttons .ok { border-color: #2f74e6; background: linear-gradient(#6ea8fb, #1169fc); color: #fff; }
```
